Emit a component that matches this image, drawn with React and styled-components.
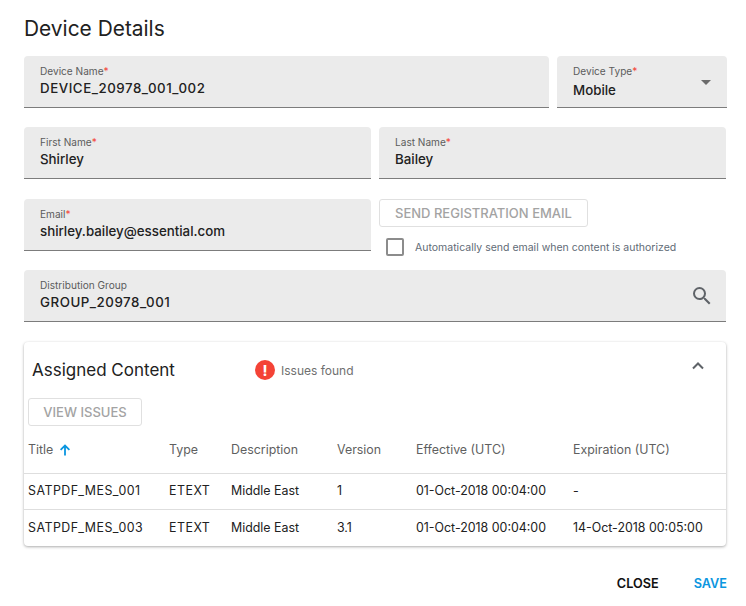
import React from 'react';
import styled, { createGlobalStyle } from 'styled-components';

const GlobalStyle = createGlobalStyle`
  body {
    margin: 0;
    background: #fff;
    font-family: Inter, "Liberation Sans", sans-serif;
    color: #212121;
  }
`;

const columns = [
  { label: 'Title', width: 145 },
  { label: 'Type', width: 62 },
  { label: 'Description', width: 106 },
  { label: 'Version', width: 79 },
  { label: 'Effective (UTC)', width: 157 },
  { label: 'Expiration (UTC)', width: 153 },
];

const rows = [
  ['SATPDF_MES_001', 'ETEXT', 'Middle East', '1', '01-Oct-2018 00:04:00', '-'],
  ['SATPDF_MES_003', 'ETEXT', 'Middle East', '3.1', '01-Oct-2018 00:04:00', '14-Oct-2018 00:05:00'],
];

function TextField({ label, value, required, code, select, children, ...rest }) {
  return (
    <Field {...rest}>
      <FieldLabel>
        {label}
        {required && <Star>*</Star>}
      </FieldLabel>
      <FieldValue $code={code} $select={select}>{value}</FieldValue>
      {children}
    </Field>
  );
}

export default function App() {
  return (
    <Dialog>
      <GlobalStyle />
      <Heading>Device Details</Heading>
      <Form>
        <Row>
          <TextField label="Device Name" value="DEVICE_20978_001_002" required code $width={525} />
          <TextField label="Device Type" value="Mobile" required select $width={170}>
            <Caret />
          </TextField>
        </Row>
        <Row>
          <TextField label="First Name" value="Shirley" required $width={347} />
          <TextField label="Last Name" value="Bailey" required $width={347} />
        </Row>
        <Row $top={1}>
          <TextField label="Email" value="shirley.bailey@essential.com" required $width={347} />
          <EmailSide>
            <OutlineButton disabled>SEND REGISTRATION EMAIL</OutlineButton>
            <CheckRow>
              <CheckBox />
              <CheckLabel>Automatically send email when content is authorized</CheckLabel>
            </CheckRow>
          </EmailSide>
        </Row>
        <Row>
          <TextField label="Distribution Group" value="GROUP_20978_001" code $width={702}>
            <SearchIcon viewBox="0 0 24 24">
              <path
                fill="#5f6368"
                d="M15.5 14h-.79l-.28-.27A6.47 6.47 0 0 0 16 9.5 6.5 6.5 0 1 0 9.5 16c1.61 0 3.09-.59 4.23-1.57l.27.28v.79l5 4.99L20.49 19l-4.99-5zm-6 0C7.01 14 5 11.99 5 9.5S7.01 5 9.5 5 14 7.01 14 9.5 11.99 14 9.5 14z"
              />
            </SearchIcon>
          </TextField>
        </Row>
      </Form>

      <Card>
        <CardHeader>
          <CardTitle>Assigned Content</CardTitle>
          <Issues>
            <IssueBadge>!</IssueBadge>
            Issues found
          </Issues>
          <Chevron viewBox="0 0 24 24">
            <path fill="none" stroke="#5f6368" strokeWidth="2" d="M7 14.5 12 9.5l5 5" />
          </Chevron>
        </CardHeader>
        <CardAction>
          <OutlineButton disabled $compact>VIEW ISSUES</OutlineButton>
        </CardAction>
        <Table>
          <thead>
            <tr>
              {columns.map((col, i) => (
                <HeadCell key={col.label} style={{ width: col.width }}>
                  {col.label}
                  {i === 0 && (
                    <SortIcon viewBox="0 0 12 12">
                      <path fill="none" stroke="#0b96e0" strokeWidth="1.8" d="M6 11.5V2M1.6 5.8 6 1.6l4.4 4.2" />
                    </SortIcon>
                  )}
                </HeadCell>
              ))}
            </tr>
          </thead>
          <tbody>
            {rows.map((row) => (
              <tr key={row[0]}>
                {row.map((cell, i) => (
                  <BodyCell key={i} $code={i < 2}>{cell}</BodyCell>
                ))}
              </tr>
            ))}
          </tbody>
        </Table>
      </Card>

      <Footer>
        <FooterButton>CLOSE</FooterButton>
        <FooterButton $primary>SAVE</FooterButton>
      </Footer>
    </Dialog>
  );
}

const Dialog = styled.div`
  width: 746px;
  height: 606px;
  box-sizing: border-box;
  padding: 16px 20px 0 24px;
  overflow: hidden;
`;

const Heading = styled.h1`
  margin: 0;
  height: 40px;
  font-size: 20.9px;
  line-height: 26px;
  font-weight: 400;
  color: #212121;
`;

const Form = styled.div`
  display: flex;
  flex-direction: column;
  gap: 19px;
`;

const Row = styled.div`
  display: flex;
  gap: 8px;
  height: 52px;
  margin-top: ${(p) => p.$top ?? 0}px;
`;

const Field = styled.div`
  position: relative;
  box-sizing: border-box;
  height: 52px;
  padding: 8px 16px 0;
  background: #ebebeb;
  border-bottom: 1px solid #7c7c7c;
  border-radius: 4px 4px 0 0;
  flex: 0 0 ${(p) => p.$width}px;
`;

const FieldLabel = styled.div`
  font-size: 10.1px;
  line-height: 14px;
  color: #5c5c5c;
`;

const Star = styled.span`
  color: #f44336;
`;

const FieldValue = styled.div`
  margin-top: ${(p) => (p.$select ? 2 : 0)}px;
  font-size: 13.3px;
  font-weight: 500;
  line-height: 20px;
  letter-spacing: ${(p) => (p.$code ? '0.55px' : '0')};
  color: #212121;
`;

const Caret = styled.span`
  position: absolute;
  right: 16px;
  top: 24px;
  width: 0;
  height: 0;
  border-left: 5px solid transparent;
  border-right: 5px solid transparent;
  border-top: 5px solid #6b6b6b;
`;

const SearchIcon = styled.svg`
  position: absolute;
  right: 12px;
  top: 14px;
  width: 24px;
  height: 24px;
`;

const EmailSide = styled.div`
  flex: 1 1 0;
  min-width: 0;
`;

const OutlineButton = styled.button`
  display: block;
  box-sizing: border-box;
  width: ${(p) => (p.$compact ? '114px' : 'auto')};
  height: 28px;
  padding: ${(p) => (p.$compact ? '0 0 1px' : '0 15px 1px')};
  background: #fff;
  border: 1px solid #e0e0e0;
  border-radius: 3px;
  font-family: inherit;
  font-size: 13px;
  font-weight: 500;
  white-space: nowrap;
  color: #a3a3a3;
`;

const CheckRow = styled.div`
  display: flex;
  align-items: center;
  margin: 11px 0 0 7px;
`;

const CheckBox = styled.span`
  box-sizing: border-box;
  width: 18px;
  height: 18px;
  border: 2px solid #8c8c8c;
  border-radius: 2px;
`;

const CheckLabel = styled.span`
  margin-left: 11px;
  font-size: 10.5px;
  color: #5f6b76;
`;

const Card = styled.section`
  width: 702px;
  height: 204px;
  margin-top: 20px;
  background: #fff;
  border-radius: 4px;
  box-shadow: 0 1px 3px rgba(0, 0, 0, 0.32), 0 0 2px rgba(0, 0, 0, 0.03);
`;

const CardHeader = styled.header`
  position: relative;
  display: flex;
  align-items: center;
  height: 56px;
  padding-left: 8px;
`;

const CardTitle = styled.h2`
  width: 223px;
  margin: 0;
  font-size: 17px;
  font-weight: 400;
  color: #212121;
`;

const Issues = styled.div`
  display: flex;
  align-items: center;
  gap: 6px;
  font-size: 12px;
  color: #6f6f6f;
`;

const IssueBadge = styled.span`
  display: flex;
  align-items: center;
  justify-content: center;
  width: 20px;
  height: 20px;
  border-radius: 50%;
  background: #f44336;
  color: #fff;
  font-size: 14px;
  font-weight: 800;
`;

const Chevron = styled.svg`
  position: absolute;
  right: 16px;
  top: 12px;
  width: 24px;
  height: 24px;
`;

const CardAction = styled.div`
  padding-left: 4px;
`;

const Table = styled.table`
  width: 100%;
  border-collapse: collapse;
  table-layout: fixed;
`;

const HeadCell = styled.th`
  box-sizing: border-box;
  height: 47px;
  padding: 1px 0 0 4px;
  border-bottom: 1px solid #dedede;
  font-size: 12.4px;
  font-weight: 400;
  text-align: left;
  color: #5f5f5f;
  &:not(:first-child) {
    padding-left: 0;
  }
`;

const SortIcon = styled.svg`
  width: 12px;
  height: 12px;
  margin-left: 6px;
  vertical-align: -2px;
`;

const BodyCell = styled.td`
  box-sizing: border-box;
  height: 36px;
  padding: 0 0 1px 4px;
  border-bottom: 1px solid #dedede;
  font-size: 12.4px;
  letter-spacing: ${(p) => (p.$code ? '0.5px' : '0')};
  color: #212121;
  white-space: nowrap;
  &:not(:first-child) {
    padding-left: 0;
  }
  tr:last-child & {
    padding-bottom: 0;
    border-bottom: 0;
  }
`;

const Footer = styled.footer`
  display: flex;
  justify-content: flex-end;
  gap: 35px;
  margin: 30px -1px 0 0;
`;

const FooterButton = styled.button`
  padding: 0;
  background: none;
  border: 0;
  font-family: inherit;
  font-size: 12.7px;
  font-weight: 600;
  line-height: 16px;
  color: ${(p) => (p.$primary ? '#0b96e0' : '#111')};
`;
